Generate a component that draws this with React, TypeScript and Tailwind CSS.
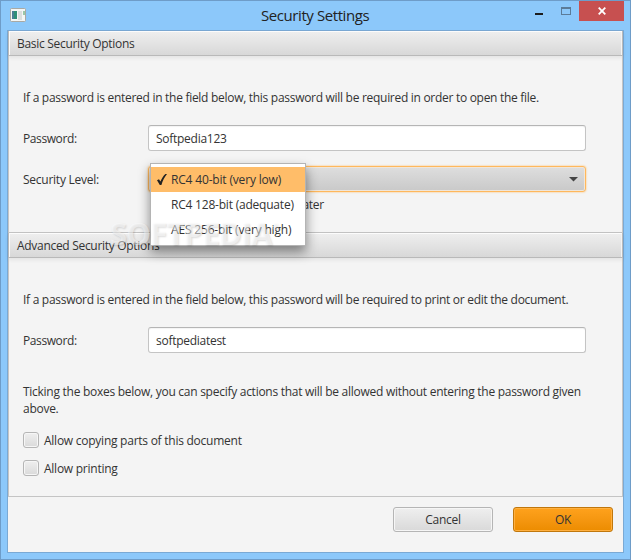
import { useState } from "react";
import type { ReactNode } from "react";

const LEVELS = [
  { label: "RC4 40-bit (very low)", tracking: "tracking-[-0.17px]" },
  { label: "RC4 128-bit (adequate)", tracking: "tracking-[-0.21px]" },
  { label: "AES 256-bit (very high)", tracking: "tracking-[-0.17px]" },
];

function PaneHeader({ children }: { children: ReactNode }) {
  return (
    <div className="h-[25px] shrink-0 border border-t-0 border-[#b9b9b9] bg-linear-to-b from-[#efefef] to-[#d8d8d8] pt-px pl-2 leading-[24px] tracking-[-0.3px] shadow-[inset_1px_1px_0_#fcfcfc,inset_-1px_0_0_#f4f4f4,0_2px_4px_#00000012]">
      {children}
    </div>
  );
}

function Field({ label, value }: { label: string; value: string }) {
  const [text, setText] = useState(value);
  return (
    <label className="flex h-[26px] items-center">
      <span className="w-[125px] pt-px tracking-[-0.4px]">{label}</span>
      <input
        value={text}
        onChange={(e) => setText(e.target.value)}
        className="h-[26px] w-[438px] rounded-[3px] border border-[#c4c4c4] border-t-[#b5b5b5] bg-white px-[7px] pt-px tracking-[-0.27px] shadow-[inset_0_1px_1px_#0000000d] outline-none"
      />
    </label>
  );
}

function CheckRow({ children }: { children: ReactNode }) {
  const [checked, setChecked] = useState(false);
  return (
    <div className="flex h-4 cursor-default items-center" onClick={() => setChecked(!checked)}>
      <span className="mr-[5px] flex size-4 items-center justify-center rounded-[3px] border border-[#b5b5b5] bg-linear-to-b from-[#efefef] to-[#dadada] text-[11px] shadow-[inset_0_0_0_1px_#f6f6f6]">
        {checked && "✔"}
      </span>
      {children}
    </div>
  );
}

function LevelMenu() {
  const [selected, setSelected] = useState(0);
  return (
    <ul className="absolute top-[-3px] left-[127px] z-10 h-[83px] w-[156px] border border-[#b4b4b4] bg-white py-[3px] shadow-[0_6px_11px_#00000073]">
      {LEVELS.map((level, i) => (
        <li
          key={level.label}
          onClick={() => setSelected(i)}
          className={`flex h-[25px] items-center pl-[6px] ${level.tracking} ${
            i === selected ? "bg-[#ffbd69]" : ""
          }`}
        >
          <span className="flex w-[14px] shrink-0">
            {i === selected && (
              <svg width="10" height="11" viewBox="0 0 10 11">
                <path d="M0 6.2 L2 5.2 L3.4 7.6 C4.6 4.6 6.2 2 8.4 0 H10 C7.4 3.2 5.8 6.6 4.4 11 H2.8 Z" fill="#222" />
              </svg>
            )}
          </span>
          <span className="whitespace-nowrap">{level.label}</span>
        </li>
      ))}
    </ul>
  );
}

function TitleBar() {
  return (
    <div className="flex h-[29px] shrink-0 items-start">
      <svg className="mt-[7px] ml-[9px]" width="16" height="14" viewBox="0 0 16 14">
        <rect x="0.5" y="0.5" width="15" height="13" rx="1" fill="#f4f6f5" stroke="#a9a9a3" />
        <rect x="2" y="3" width="5" height="8" fill="#2f8f77" />
        <rect x="2" y="3" width="2" height="8" fill="#4a7f95" />
        <rect x="8" y="3" width="4" height="9" fill="#dcdedd" />
        <rect x="13" y="3" width="2" height="4" fill="#9cc8a8" />
      </svg>
      <h1 className="mt-[3px] ml-[235px] w-[262px] text-[15px] leading-[23px] tracking-[-0.42px] whitespace-nowrap text-[#222]">
        Security Settings
      </h1>
      <svg className="ml-[11px]" width="40" height="20" viewBox="0 0 40 20" shapeRendering="crispEdges">
        <rect x="1" y="12" width="8" height="2" fill="#1c1c1c" />
        <path d="M27 6h10v8h-10z M28 8v5h8v-5z" fillRule="evenodd" fill="#5b7b98" />
      </svg>
      <button className="ml-[5px] flex h-5 w-[45px] items-center justify-center bg-[#c75050]">
        <svg width="8" height="8" viewBox="0 0 8 8">
          <path d="M0.7 0.7 L7.3 7.3 M7.3 0.7 L0.7 7.3" stroke="#fff" strokeWidth="1.8" />
        </svg>
      </button>
    </div>
  );
}

export default function App() {
  return (
    <div className="flex h-[560px] w-[631px] flex-col border border-[#6e9cc8] bg-[#8cc8fa] font-['Open_Sans','Noto_Sans',sans-serif] text-[12px] leading-[17px] tracking-[-0.25px] text-[#333]">
      <TitleBar />
      <div className="mx-[6px] mb-[6px] flex flex-1 flex-col border border-[#7aa9d4] bg-[#f4f4f4]">
        <PaneHeader>Basic Security Options</PaneHeader>
        <section className="h-[177px] border-x border-b border-[#c4c4c4] pt-[33px] pl-[14px]">
          <p className="mb-[19px] tracking-[-0.29px] whitespace-nowrap">
            If a password is entered in the field below, this password will be required in order to open the file.
          </p>
          <Field label="Password:" value="Softpedia123" />
          <div className="relative mt-[15px]">
            <div className="flex h-[26px] items-center">
              <span className="w-[125px] pt-px">Security Level:</span>
              <div className="flex h-[26px] w-[438px] items-center justify-end rounded-[3px] border border-[#ffb85c] bg-linear-to-b from-[#dedede] to-[#c9c9c9] pr-[7px] shadow-[0_0_2px_#ffb85c,inset_0_0_0_1px_#efe6da]">
                <svg width="9" height="5" viewBox="0 0 9 5">
                  <path d="M0 0h9L4.5 4.5z" fill="#444" />
                </svg>
              </div>
            </div>
            <p className="mt-[4px] ml-[125px] w-[176px] text-right whitespace-nowrap">Compatible: Acrobat 3 or later</p>
            <LevelMenu />
            <div className="pointer-events-none absolute top-[49px] left-[87px] z-20 font-['Open_Sans',sans-serif] text-[31px] leading-[36px] font-bold tracking-[-0.75px] whitespace-nowrap text-white/50 [text-shadow:1px_1px_2px_#00000024]">
              SOFTPEDIA<sup className="top-[-15px] text-[9px] tracking-normal">®</sup>
            </div>
          </div>
        </section>
        <PaneHeader>Advanced Security Options</PaneHeader>
        <section className="h-[239px] border-x border-b border-[#c4c4c4] pt-[33px] pl-[14px]">
          <p className="mb-[19px] tracking-[-0.29px] whitespace-nowrap">
            If a password is entered in the field below, this password will be required to print or edit the document.
          </p>
          <Field label="Password:" value="softpediatest" />
          <p className="mt-[30px] mb-[15px] tracking-[-0.27px] whitespace-nowrap">
            Ticking the boxes below, you can specify actions that will be allowed without entering the password given
            <br />
            above.
          </p>
          <div className="flex flex-col gap-3">
            <CheckRow>Allow copying parts of this document</CheckRow>
            <CheckRow>Allow printing</CheckRow>
          </div>
        </section>
        <footer className="flex justify-end gap-5 pt-[10px] pr-[10px]">
          <button className="h-[25px] w-[100px] rounded-[3px] border border-[#b5b5b5] bg-linear-to-b from-[#efefef] to-[#d9d9d9] shadow-[inset_0_0_0_1px_#f6f6f6]">
            Cancel
          </button>
          <button className="h-[25px] w-[100px] rounded-[3px] border border-[#c0770c] bg-linear-to-b from-[#ffa21c] to-[#ec8c00] shadow-[inset_0_0_0_1px_#ffb040]">
            OK
          </button>
        </footer>
      </div>
    </div>
  );
}
